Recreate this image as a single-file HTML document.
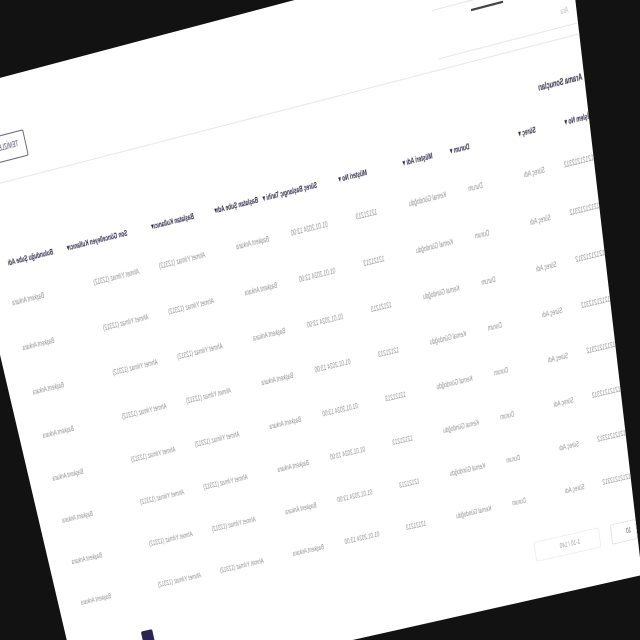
<!DOCTYPE html>
<html><head><meta charset="utf-8">
<style>
html,body{margin:0;padding:0;width:640px;height:640px;overflow:hidden;}
body{background:#121212;position:relative;}
#bg{position:absolute;left:0;top:0;width:640px;height:640px;}
#pg{position:absolute;left:0;top:0;width:0;height:0;
transform-origin:0 0;
transform:matrix3d(-0.98497,0.26511,0,0.00006103, 0.24691,1.12711,0,0.00020205, 0,0,1,0, 567,-72,0,1);
font-family:"Liberation Sans",sans-serif;}
#pg span{position:absolute;white-space:nowrap;transform-origin:0 50%;transform:scaleX(.62);font-size:8px;line-height:10px;}
.h{color:#2b2645;font-weight:bold;}
.d{color:#8c8c8c;}
.ln{position:absolute;height:1px;background:#e8e8e8;}
</style></head><body>
<svg id="bg" width="640" height="640" viewBox="0 0 640 640"><polygon points="-61,94 567,-72 642,575 81,701" fill="#fff"/></svg>
<div id="pg">
<div class="ln" style="left:0;top:40px;width:140px;"></div>
<div class="ln" style="left:0;top:84px;width:140px;"></div>
<div style="position:absolute;left:70px;top:48px;width:32px;height:2px;background:#444;"></div>
<span class="d" style="left:8px;top:66px;color:#bbb">Ara</span>
<div style="position:absolute;left:564px;top:51px;width:66px;height:23px;border:1px solid #6b6880;border-radius:2px;"></div>
<span class="h" style="left:572px;top:58px;font-weight:normal;color:#4a4660">TEMİZLE</span>
<div class="ln" style="left:0;top:94px;width:610px;"></div>
<span class="h" style="left:2px;top:128px;font-size:9px">Arama Sonuçları</span>

<span class="h" style="left:0;top:166px">İşlem No ▾</span>
<span class="h" style="left:54px;top:166px">Süreç ▾</span>
<span class="h" style="left:122px;top:166px">Durum ▾</span>
<span class="h" style="left:160px;top:166px">Müşteri Adı ▾</span>
<span class="h" style="left:228px;top:166px">Müşteri No ▾</span>
<span class="h" style="left:280px;top:166px">Süreç Başlangıç Tarihi ▾</span>
<span class="h" style="left:342px;top:166px">Başlatan Şube Adı▾</span>
<span class="h" style="left:410px;top:166px">Başlatan Kullanıcı▾</span>
<span class="h" style="left:481px;top:166px">Son Güncelleyen Kullanıcı▾</span>
<span class="h" style="left:561px;top:166px">Bulunduğu Şube Adı</span>

<span class="d" style="left:0;top:205px">12121212312</span><span class="d" style="left:50px;top:205px">Süreç Adı</span><span class="d" style="left:114px;top:205px">Durum</span><span class="d" style="left:152px;top:205px">Kemal Gündoğdu</span><span class="d" style="left:224px;top:205px">12121213</span><span class="d" style="left:276px;top:205px">01.01.2024 13:00</span><span class="d" style="left:338px;top:205px">Başkent Ankara</span><span class="d" style="left:406px;top:205px">Ahmet Yılmaz (12312)</span><span class="d" style="left:477px;top:205px">Ahmet Yılmaz (12312)</span><span class="d" style="left:580px;top:205px">Başkent Ankara</span>
<span class="d" style="left:0;top:251px">12121212312</span><span class="d" style="left:50px;top:251px">Süreç Adı</span><span class="d" style="left:114px;top:251px">Durum</span><span class="d" style="left:152px;top:251px">Kemal Gündoğdu</span><span class="d" style="left:224px;top:251px">12121213</span><span class="d" style="left:276px;top:251px">01.01.2024 13:00</span><span class="d" style="left:338px;top:251px">Başkent Ankara</span><span class="d" style="left:406px;top:251px">Ahmet Yılmaz (12312)</span><span class="d" style="left:477px;top:251px">Ahmet Yılmaz (12312)</span><span class="d" style="left:580px;top:251px">Başkent Ankara</span>
<span class="d" style="left:0;top:297px">12121212312</span><span class="d" style="left:50px;top:297px">Süreç Adı</span><span class="d" style="left:114px;top:297px">Durum</span><span class="d" style="left:152px;top:297px">Kemal Gündoğdu</span><span class="d" style="left:224px;top:297px">12121213</span><span class="d" style="left:276px;top:297px">01.01.2024 13:00</span><span class="d" style="left:338px;top:297px">Başkent Ankara</span><span class="d" style="left:406px;top:297px">Ahmet Yılmaz (12312)</span><span class="d" style="left:477px;top:297px">Ahmet Yılmaz (12312)</span><span class="d" style="left:580px;top:297px">Başkent Ankara</span>
<span class="d" style="left:0;top:343px">12121212312</span><span class="d" style="left:50px;top:343px">Süreç Adı</span><span class="d" style="left:114px;top:343px">Durum</span><span class="d" style="left:152px;top:343px">Kemal Gündoğdu</span><span class="d" style="left:224px;top:343px">12121213</span><span class="d" style="left:276px;top:343px">01.01.2024 13:00</span><span class="d" style="left:338px;top:343px">Başkent Ankara</span><span class="d" style="left:406px;top:343px">Ahmet Yılmaz (12312)</span><span class="d" style="left:477px;top:343px">Ahmet Yılmaz (12312)</span><span class="d" style="left:580px;top:343px">Başkent Ankara</span>
<span class="d" style="left:0;top:389px">12121212312</span><span class="d" style="left:50px;top:389px">Süreç Adı</span><span class="d" style="left:114px;top:389px">Durum</span><span class="d" style="left:152px;top:389px">Kemal Gündoğdu</span><span class="d" style="left:224px;top:389px">12121213</span><span class="d" style="left:276px;top:389px">01.01.2024 13:00</span><span class="d" style="left:338px;top:389px">Başkent Ankara</span><span class="d" style="left:406px;top:389px">Ahmet Yılmaz (12312)</span><span class="d" style="left:477px;top:389px">Ahmet Yılmaz (12312)</span><span class="d" style="left:580px;top:389px">Başkent Ankara</span>
<span class="d" style="left:0;top:435px">12121212312</span><span class="d" style="left:50px;top:435px">Süreç Adı</span><span class="d" style="left:114px;top:435px">Durum</span><span class="d" style="left:152px;top:435px">Kemal Gündoğdu</span><span class="d" style="left:224px;top:435px">12121213</span><span class="d" style="left:276px;top:435px">01.01.2024 13:00</span><span class="d" style="left:338px;top:435px">Başkent Ankara</span><span class="d" style="left:406px;top:435px">Ahmet Yılmaz (12312)</span><span class="d" style="left:477px;top:435px">Ahmet Yılmaz (12312)</span><span class="d" style="left:580px;top:435px">Başkent Ankara</span>
<span class="d" style="left:0;top:481px">12121212312</span><span class="d" style="left:50px;top:481px">Süreç Adı</span><span class="d" style="left:114px;top:481px">Durum</span><span class="d" style="left:152px;top:481px">Kemal Gündoğdu</span><span class="d" style="left:224px;top:481px">12121213</span><span class="d" style="left:276px;top:481px">01.01.2024 13:00</span><span class="d" style="left:338px;top:481px">Başkent Ankara</span><span class="d" style="left:406px;top:481px">Ahmet Yılmaz (12312)</span><span class="d" style="left:477px;top:481px">Ahmet Yılmaz (12312)</span><span class="d" style="left:580px;top:481px">Başkent Ankara</span>
<span class="d" style="left:0;top:527px">12121212312</span><span class="d" style="left:50px;top:527px">Süreç Adı</span><span class="d" style="left:114px;top:527px">Durum</span><span class="d" style="left:152px;top:527px">Kemal Gündoğdu</span><span class="d" style="left:224px;top:527px">12121213</span><span class="d" style="left:276px;top:527px">01.01.2024 13:00</span><span class="d" style="left:338px;top:527px">Başkent Ankara</span><span class="d" style="left:406px;top:527px">Ahmet Yılmaz (12312)</span><span class="d" style="left:477px;top:527px">Ahmet Yılmaz (12312)</span><span class="d" style="left:580px;top:527px">Başkent Ankara</span>

<div style="position:absolute;left:0;top:578px;width:26px;height:20px;border:1px solid #e4e4e4;border-radius:2px;"></div>
<span class="d" style="left:6px;top:584px;color:#555">10</span>
<div style="position:absolute;left:40px;top:578px;width:70px;height:20px;border:1px solid #eee;border-radius:2px;"></div>
<span class="d" style="left:62px;top:584px;color:#999">1-10 / 140</span>
<div style="position:absolute;left:543px;top:578px;width:13px;height:14px;background:#2b2454;border-radius:2px;"></div>
</div>
</body></html>
